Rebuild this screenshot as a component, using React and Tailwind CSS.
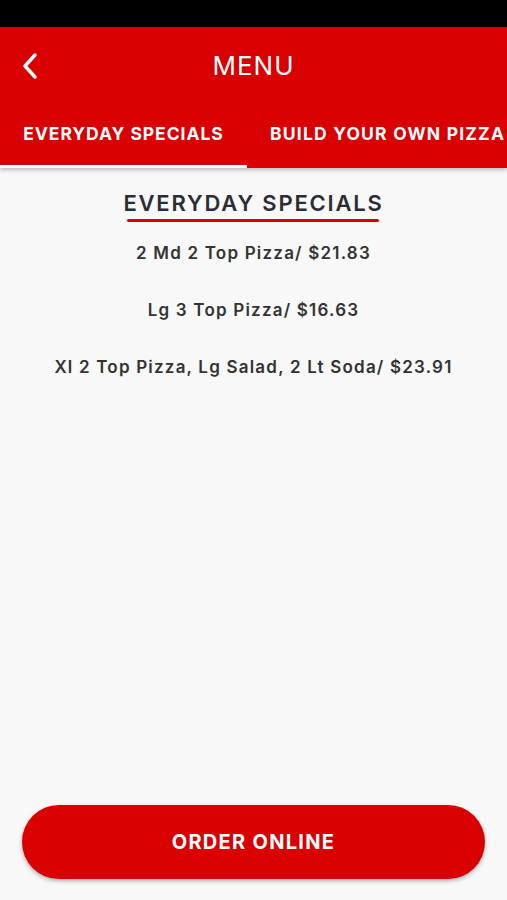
import React from "react";

const SPECIALS = [
	"2 Md 2 Top Pizza/ $21.83",
	"Lg 3 Top Pizza/ $16.63",
	"Xl 2 Top Pizza, Lg Salad, 2 Lt Soda/ $23.91",
];

export default function App() {
	return (
		<div className="flex h-[900px] w-[507px] flex-col overflow-hidden bg-[#f8f8f8] font-['Inter',sans-serif]">
			<div className="h-[27px] shrink-0 bg-black" />

			<header className="relative z-10 shrink-0 bg-[#d80000] shadow-[0_2px_4px_rgba(0,0,0,0.25)]">
				<div className="relative flex h-[78px] items-center justify-center">
					<button className="absolute left-[20px] top-[25px] text-white">
						<svg width="20" height="28" viewBox="0 0 20 28" fill="none">
							<path
								d="M15 3 L5 14 L15 25"
								stroke="currentColor"
								strokeWidth="3.4"
								strokeLinecap="round"
								strokeLinejoin="round"
							/>
						</svg>
					</button>
					<h1 className="pb-[2px] text-[26px] font-normal tracking-[1px] text-white">
						MENU
					</h1>
				</div>
				<nav className="flex h-[63px] items-stretch whitespace-nowrap">
					<div className="flex w-[247px] shrink-0 flex-col">
						<span className="flex flex-1 items-center justify-center pb-[2px] text-[17.5px] font-bold tracking-[0.95px] text-white">
							EVERYDAY SPECIALS
						</span>
						<div className="h-[3px] bg-white" />
					</div>
					<span className="flex flex-1 items-center pl-[23px] pb-[5px] text-[17.5px] font-bold tracking-[1.2px] text-white">
						BUILD YOUR OWN PIZZA
					</span>
				</nav>
			</header>

			<main className="flex flex-1 flex-col items-center pt-[20px]">
				<div className="flex flex-col items-center">
					<h2 className="text-[22px] font-semibold leading-[30px] tracking-[1.8px] text-[#2a2d33]">
						EVERYDAY SPECIALS
					</h2>
					<div className="mt-[1px] h-[3px] w-[252px] rounded-full bg-[#d80000]" />
				</div>
				<ul className="mt-[20px] flex flex-col items-center gap-[35px]">
					{SPECIALS.map((item) => (
						<li
							key={item}
							className="text-[17px] font-semibold leading-[22px] tracking-[1.2px] text-[#333]"
						>
							{item}
						</li>
					))}
				</ul>
			</main>

			<div className="shrink-0 px-[22px] pb-[21px]">
				<button className="flex h-[74px] w-full items-center justify-center rounded-full bg-[#d80000] shadow-[0_2px_4px_rgba(0,0,0,0.3)]">
					<span className="text-[20px] font-bold tracking-[1.3px] text-white">
						ORDER ONLINE
					</span>
				</button>
			</div>
		</div>
	);
}
